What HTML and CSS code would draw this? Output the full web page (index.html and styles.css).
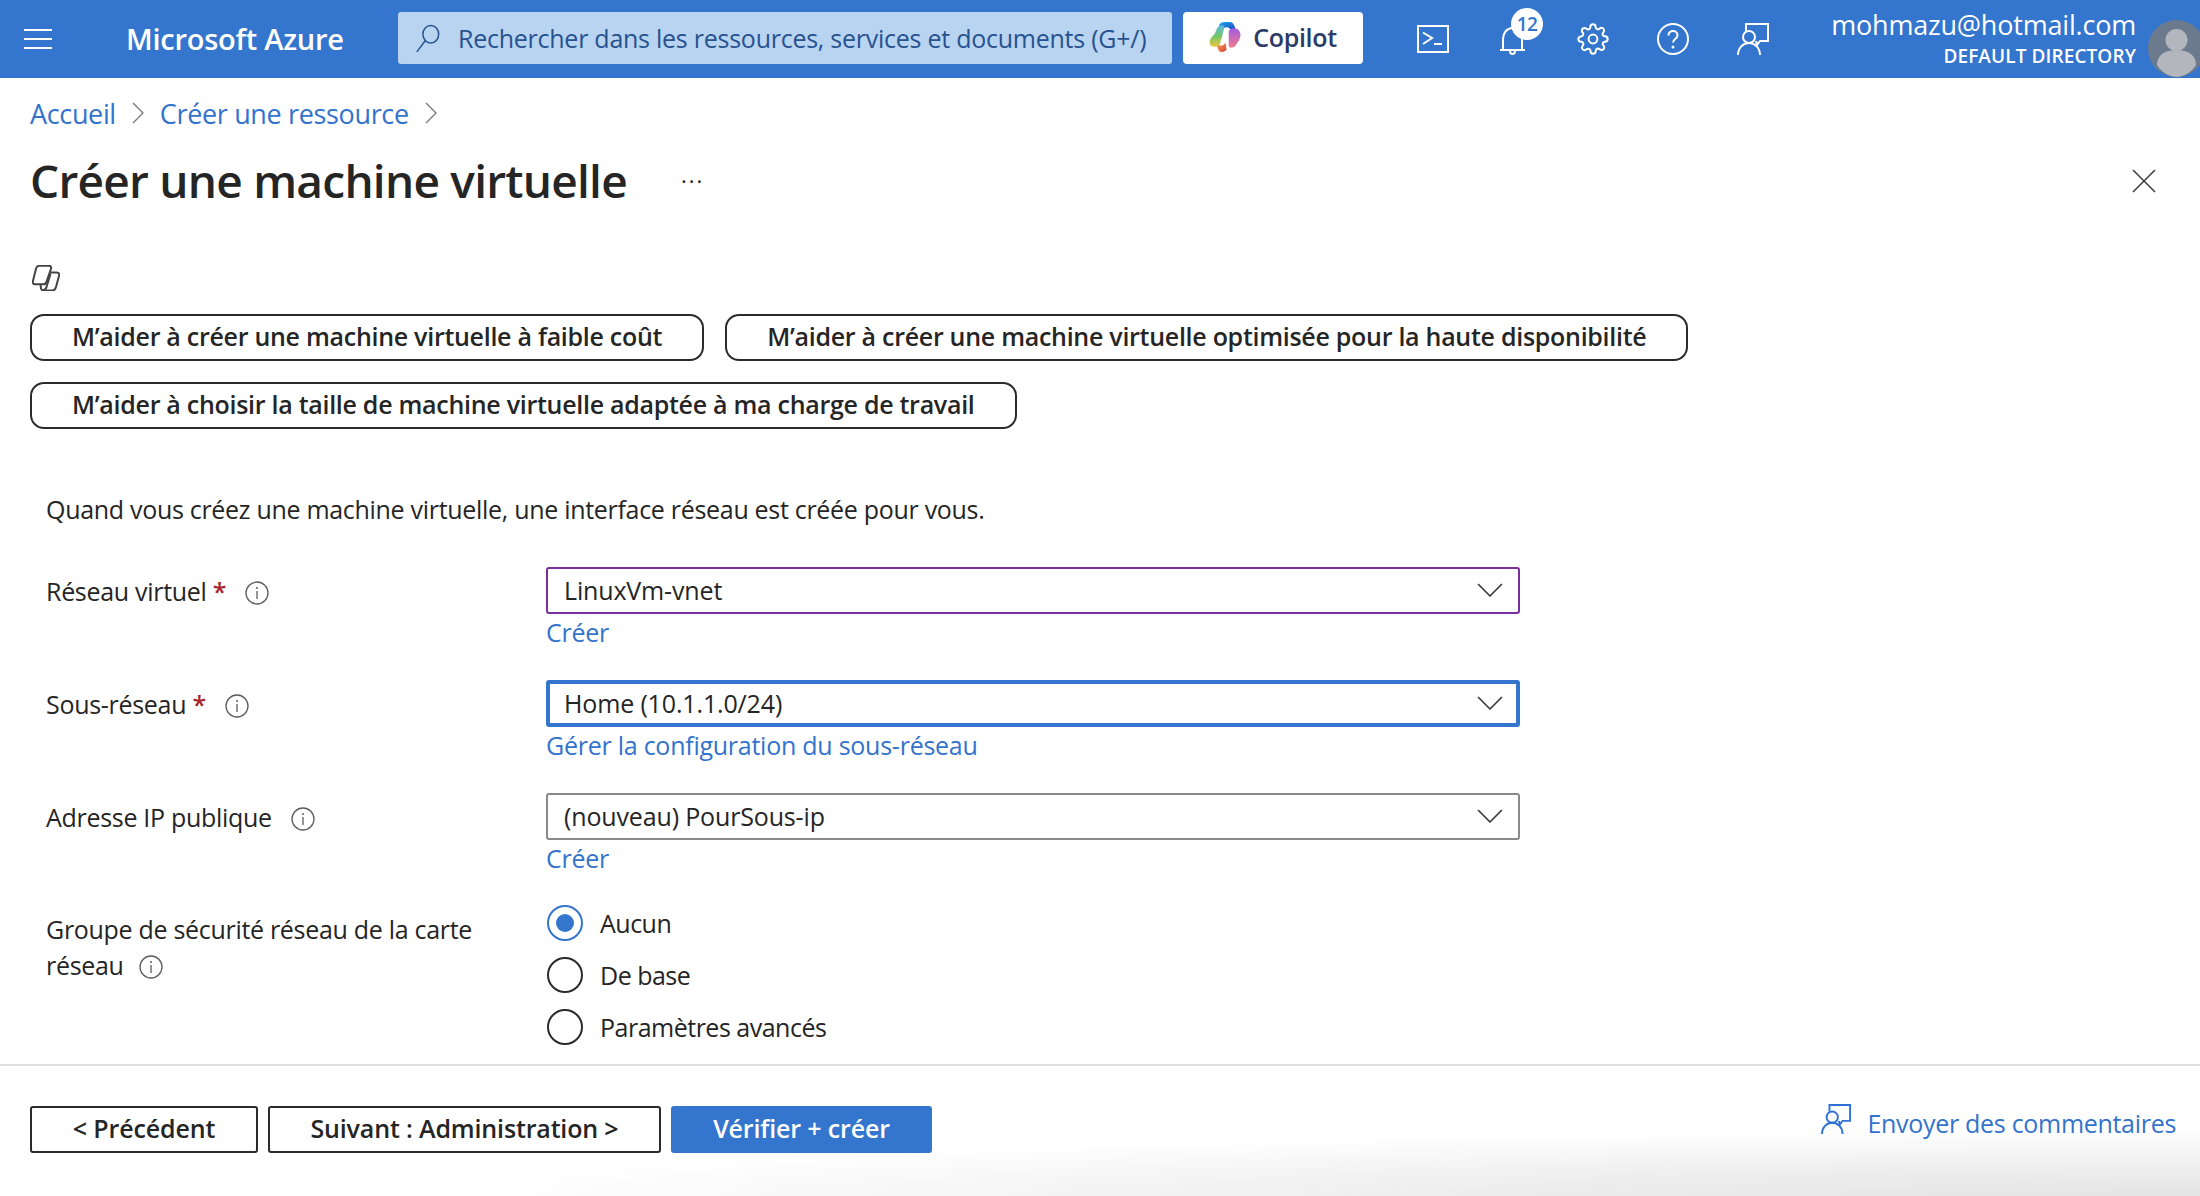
FILE: index.html
```html
<!DOCTYPE html>
<html lang="fr">
<head>
    <meta charset="UTF-8">
    <meta name="viewport" content="width=device-width, initial-scale=1.0">
    <title>Créer une machine virtuelle - Microsoft Azure</title>
    <link rel="stylesheet" href="styles.css">
</head>
<body>
<header class="topbar">
    <button class="menu-btn" aria-label="Menu"><span></span><span></span><span></span></button>
    <div class="brand">Microsoft Azure</div>
    <div class="search">
        <svg class="search-icon" viewBox="0 0 28 32" fill="none" stroke="#27528f" stroke-width="1.6"><ellipse cx="17" cy="12" rx="8.5" ry="9.5"/><path d="M11 19 2 31"/></svg>
        <span>Rechercher dans les ressources, services et documents (G+/)</span>
    </div>
    <button class="copilot">
        <svg class="copilot-logo" viewBox="0 0 30 28">
            <defs>
                <linearGradient id="cpA" x1="0" y1="0" x2="1" y2="1"><stop offset="0" stop-color="#1ea7e8"/><stop offset="1" stop-color="#1c3fc4"/></linearGradient>
                <linearGradient id="cpB" x1="0" y1="0" x2="0" y2="1"><stop offset="0" stop-color="#5fb8e8"/><stop offset=".5" stop-color="#6fc66a"/><stop offset="1" stop-color="#f2c53d"/></linearGradient>
                <linearGradient id="cpC" x1="0" y1="0" x2="0" y2="1"><stop offset="0" stop-color="#a35de0"/><stop offset="1" stop-color="#ef7a8e"/></linearGradient>
                <linearGradient id="cpD" x1="0" y1="0" x2="1" y2="1"><stop offset="0" stop-color="#f7a14b"/><stop offset="1" stop-color="#d9443f"/></linearGradient>
            </defs>
            <path fill="url(#cpA)" d="M9 3C10 1 12 0 14 0h5c2 0 3 1 4 3l2 5h-5c-1-2-2-3-4-3-2 0-3 1-4 3z"/>
            <path fill="url(#cpB)" d="M7 6c1-2 3-3 5-3 1 0 2 1 2 2l-4 15c-.5 2-2 3-4 3H4c-3 0-4.500-3-3.500-6 1-3 3-4 4.500-6z"/>
            <path fill="url(#cpC)" d="M18 9c.5-2 2-3 4-3h2c3 0 5 3 5 6 0 4-2 6-4 9-1 2-3 3-5 3-1 0-2-1-2-2z"/>
            <path fill="url(#cpD)" d="M7 22h5c1 0 2-1 3-3l1 7c-1 1-2 2-4 2H11c-2 0-3-2-4-6z"/>
        </svg>
        <span>Copilot</span>
    </button>
    <nav class="top-icons">
        <a class="top-icon" href="#"><svg viewBox="0 0 32 28" fill="none" stroke="#fff" stroke-width="2"><rect x="1" y="1" width="30" height="26"/><path d="M6 7.500 15 13l-9 6M17 19h8"/></svg></a>
        <a class="top-icon bell" href="#">
            <svg viewBox="0 0 26 30" fill="none" stroke="#fff" stroke-width="2"><path d="M3 24V13C3 7 7 2 12.500 2S22 7 22 13v11M0 24h25M10 25c0 4 5 4 5 0"/></svg>
            <span class="badge">12</span>
        </a>
        <a class="top-icon" href="#"><svg viewBox="0 0 24 24" fill="none" stroke="#fff" stroke-width="1.5"><circle cx="12" cy="12" r="3.300"/><path d="M19.400 15a1.650 1.650 0 0 0 .33 1.820l.06.06a2 2 0 0 1 0 2.830 2 2 0 0 1-2.830 0l-.06-.06a1.650 1.650 0 0 0-1.820-.33 1.650 1.650 0 0 0-1 1.510V21a2 2 0 0 1-2 2 2 2 0 0 1-2-2v-.09A1.650 1.650 0 0 0 9 19.400a1.650 1.650 0 0 0-1.820.33l-.06.06a2 2 0 0 1-2.830 0 2 2 0 0 1 0-2.830l.06-.06a1.650 1.650 0 0 0 .33-1.820 1.650 1.650 0 0 0-1.510-1H3a2 2 0 0 1-2-2 2 2 0 0 1 2-2h.09A1.650 1.650 0 0 0 4.600 9a1.650 1.650 0 0 0-.33-1.820l-.06-.06a2 2 0 0 1 0-2.830 2 2 0 0 1 2.830 0l.06.06a1.650 1.650 0 0 0 1.820.33H9a1.650 1.650 0 0 0 1-1.510V3a2 2 0 0 1 2-2 2 2 0 0 1 2 2v.09a1.650 1.650 0 0 0 1 1.510 1.650 1.650 0 0 0 1.820-.33l.06-.06a2 2 0 0 1 2.830 0 2 2 0 0 1 0 2.830l-.06.06a1.650 1.650 0 0 0-.33 1.820V9a1.650 1.650 0 0 0 1.510 1H21a2 2 0 0 1 2 2 2 2 0 0 1-2 2h-.09a1.650 1.650 0 0 0-1.510 1z"/></svg></a>
        <a class="top-icon" href="#"><svg viewBox="0 0 32 32" fill="none" stroke="#fff" stroke-width="2"><circle cx="16" cy="16" r="15"/><path d="M11.500 12.500C11.500 9.500 14 8 16 8s4.500 1.500 4.500 4.300c0 3.700-4.500 3.700-4.500 7.200"/><circle cx="16" cy="24" r="1.500" fill="#fff" stroke="none"/></svg></a>
        <a class="top-icon" href="#"><svg viewBox="0 0 32 32" fill="none" stroke="#fff" stroke-width="2"><use href="#fb"/></svg></a>
    </nav>
    <div class="account">
        <div class="account-mail">mohmazu@hotmail.com</div>
        <div class="account-dir">DEFAULT DIRECTORY</div>
    </div>
    <div class="avatar">
        <svg viewBox="0 0 57 57"><circle cx="28.500" cy="20" r="11" fill="#b3b7bd"/><path fill="#b3b7bd" d="M9 45c0-10 8-15 19.500-15S48 35 48 45c-5 8-13 12-19.500 12S14 53 9 45z"/></svg>
    </div>
</header>

<svg width="0" height="0" class="defs">
    <symbol id="fb" viewBox="0 0 32 32">
        <path d="M9 8V1h22v17h-8l-3 4-1-4"/>
        <circle cx="12" cy="14" r="6"/>
        <path d="M1 32c0-7 5-12 11-12s11 5 11 12"/>
    </symbol>
    <symbol id="info" viewBox="0 0 24 24">
        <circle cx="12" cy="12" r="11" fill="none" stroke="#5c5c5c" stroke-width="1.300"/>
        <path d="M12 10v8" stroke="#5c5c5c" stroke-width="1.300"/>
        <circle cx="12" cy="7" r="1" fill="#5c5c5c"/>
    </symbol>
    <symbol id="chev" viewBox="0 0 24 14" preserveAspectRatio="none">
        <path d="M1 1 12 13 23 1" fill="none" stroke="#3a3a3a" stroke-width="1.500"/>
    </symbol>
</svg>

<main class="page">
    <div class="breadcrumb">
        <a href="#">Accueil</a>
        <svg class="crumb-sep" viewBox="0 0 12 22"><path d="M1 1 11 11 1 21" fill="none" stroke="#777" stroke-width="1.300"/></svg>
        <a href="#">Créer une ressource</a>
        <svg class="crumb-sep" viewBox="0 0 12 22"><path d="M1 1 11 11 1 21" fill="none" stroke="#777" stroke-width="1.300"/></svg>
    </div>

    <div class="title-row">
        <h1>Créer une machine virtuelle</h1>
        <span class="more">···</span>
        <svg class="close" viewBox="0 0 24 24"><path d="M1 1 23 23M23 1 1 23" stroke="#3a3a3a" stroke-width="1.500"/></svg>
    </div>

    <svg class="copilot-mono" viewBox="0 0 28 26" fill="none" stroke="#444" stroke-width="2">
        <path d="M7 .8h10c2 0 2.500 1.500 2 3l-4.500 13c-.5 1.500-1.500 2.500-3 2.500H3c-2 0-2.500-1.500-2-3.500l3-12c.5-2 1.500-3 3-3z"/>
        <path d="M18 7.500h7c2 0 2.500 1.500 2 3.500l-3 11c-.5 2-2 3.500-4 3.500H11c-1 0-1.500-.5-2-2l-.5-4"/>
        <path d="M11 25c2 0 3-1 3.500-3l4-13"/>
    </svg>

    <div class="prompts">
        <button class="pill">M’aider à créer une machine virtuelle à faible coût</button>
        <button class="pill">M’aider à créer une machine virtuelle optimisée pour la haute disponibilité</button>
        <button class="pill">M’aider à choisir la taille de machine virtuelle adaptée à ma charge de travail</button>
    </div>

    <form class="form">
        <p class="intro">Quand vous créez une machine virtuelle, une interface réseau est créée pour vous.</p>

        <div class="field">
            <label class="field-label">Réseau virtuel <span class="req">*</span><svg class="info"><use href="#info"/></svg></label>
            <div class="control">
                <div class="dropdown hover"><span>LinuxVm-vnet</span><svg class="chev"><use href="#chev"/></svg></div>
                <a class="sub-link" href="#">Créer</a>
            </div>
        </div>

        <div class="field">
            <label class="field-label">Sous-réseau <span class="req">*</span><svg class="info"><use href="#info"/></svg></label>
            <div class="control">
                <div class="dropdown focus"><span>Home (10.1.1.0/24)</span><svg class="chev"><use href="#chev"/></svg></div>
                <a class="sub-link" href="#">Gérer la configuration du sous-réseau</a>
            </div>
        </div>

        <div class="field">
            <label class="field-label">Adresse IP publique<svg class="info"><use href="#info"/></svg></label>
            <div class="control">
                <div class="dropdown"><span>(nouveau) PourSous-ip</span><svg class="chev"><use href="#chev"/></svg></div>
                <a class="sub-link" href="#">Créer</a>
            </div>
        </div>

        <div class="field radio-field">
            <label class="field-label">Groupe de sécurité réseau de la carte réseau<svg class="info"><use href="#info"/></svg></label>
            <div class="radios">
                <div class="radio checked"><span class="dot"></span>Aucun</div>
                <div class="radio"><span class="dot"></span>De base</div>
                <div class="radio"><span class="dot"></span>Paramètres avancés</div>
            </div>
        </div>
    </form>
</main>

<footer class="footer">
    <button class="btn btn-prev">&lt; Précédent</button>
    <button class="btn btn-next">Suivant : Administration &gt;</button>
    <button class="btn btn-primary">Vérifier + créer</button>
    <a class="feedback" href="#"><svg viewBox="0 0 32 32" fill="none" stroke="#2f6fd6" stroke-width="2"><use href="#fb"/></svg>Envoyer des commentaires</a>
</footer>
</body>
</html>
```

FILE: styles.css
```css
* {
    box-sizing: border-box;
}
html, body {
    margin: 0;
    padding: 0;
}
body {
    width: 2200px;
    height: 1196px;
    overflow: hidden;
    display: flex;
    flex-direction: column;
    font-family: "Open Sans", "Noto Sans", sans-serif;
    font-size: 25px;
    color: #252525;
    background: #fff;
}
a {
    color: #3373cc;
    text-decoration: none;
}
button {
    font-family: inherit;
    cursor: pointer;
}
.defs {
    position: absolute;
}

/* top bar */
.topbar {
    height: 78px;
    flex: none;
    display: flex;
    align-items: center;
    background: #3475cd;
    color: #fff;
    overflow: hidden;
}
.menu-btn {
    width: 28px;
    height: 20px;
    margin-left: 24px;
    padding: 0;
    border: 0;
    background: none;
    display: flex;
    flex-direction: column;
    justify-content: space-between;
}
.menu-btn span {
    display: block;
    height: 2px;
    background: #fff;
}
.brand {
    margin-left: 74px;
    margin-bottom: 2px;
    width: 272px;
    font-size: 29px;
    font-weight: 600;
    letter-spacing: -0.25px;
}
.search {
    width: 774px;
    height: 52px;
    margin-bottom: 2px;
    display: flex;
    align-items: center;
    padding-left: 17px;
    border-radius: 3px;
    background: #b9d4f0;
    color: #27528f;
    font-size: 25px;
    letter-spacing: -0.25px;
    white-space: nowrap;
}
.search-icon {
    width: 26px;
    height: 30px;
    margin-right: 17px;
}
.copilot {
    width: 180px;
    height: 52px;
    margin-left: 11px;
    margin-bottom: 2px;
    padding: 0 0 2px;
    display: flex;
    align-items: center;
    justify-content: center;
    gap: 11px;
    border: 0;
    border-radius: 4px;
    background: #fff;
    color: #2b3a67;
    font-size: 25px;
    font-weight: 600;
    letter-spacing: -0.3px;
}
.copilot-logo {
    width: 33px;
    height: 30px;
}
.top-icons {
    margin-left: 30px;
    display: flex;
}
.top-icon {
    position: relative;
    width: 80px;
    height: 78px;
    display: flex;
    align-items: center;
    justify-content: center;
}
.top-icon svg {
    width: 32px;
    height: 32px;
}
.bell svg {
    width: 26px;
    height: 30px;
    margin-top: 3px;
}
.badge {
    position: absolute;
    left: 38px;
    top: 8px;
    width: 32px;
    height: 32px;
    border-radius: 50%;
    background: #fff;
    color: #3475cd;
    font-size: 19px;
    font-weight: 600;
    text-align: center;
    line-height: 32px;
    letter-spacing: -0.5px;
}
.account {
    margin-left: auto;
    text-align: right;
    white-space: nowrap;
}
.account-mail {
    font-size: 27px;
    line-height: 33px;
    letter-spacing: -0.2px;
}
.account-dir {
    margin-top: 2px;
    font-size: 19px;
    font-weight: 600;
    line-height: 27px;
    letter-spacing: 0.1px;
}
.avatar {
    width: 57px;
    height: 57px;
    flex: none;
    margin: 18px -5px 0 12px;
    border-radius: 50%;
    background: #6c7a8d;
    overflow: hidden;
}
.avatar svg {
    display: block;
}

/* page head */
.page {
    flex: 1;
    padding: 0 30px;
    min-height: 0;
}
.breadcrumb {
    height: 36px;
    margin-top: 17px;
    display: flex;
    align-items: center;
    font-size: 27px;
    letter-spacing: -0.35px;
}
.crumb-sep {
    width: 12px;
    height: 22px;
    margin: 0 16px 0 16px;
}
.title-row {
    position: relative;
    height: 64px;
    margin-top: 17px;
    display: flex;
    align-items: center;
}
h1 {
    margin: 0;
    font-size: 46px;
    font-weight: 600;
    letter-spacing: -0.75px;
    white-space: nowrap;
}
.more {
    margin-left: 54px;
    font-size: 22px;
    letter-spacing: 2px;
}
.close {
    position: absolute;
    right: 14px;
    top: 21px;
    width: 24px;
    height: 24px;
}
.copilot-mono {
    display: block;
    width: 28px;
    height: 26px;
    margin: 53px 0 0 2px;
}
.prompts {
    width: 1680px;
    margin-top: 23px;
    display: flex;
    flex-wrap: wrap;
    gap: 21px;
}
.pill {
    height: 47px;
    padding: 0 40px 3px;
    border: 2px solid #2b2b2b;
    border-radius: 14px;
    background: #fff;
    color: #252525;
    font-size: 25px;
    font-weight: 600;
    letter-spacing: -0.28px;
    white-space: nowrap;
}

/* form */
.form {
    padding-left: 16px;
}
.intro {
    margin: 64px 0 0;
    height: 34px;
    line-height: 33px;
    letter-spacing: -0.3px;
}
.field {
    display: flex;
    align-items: flex-start;
    height: 113px;
}
.intro + .field {
    margin-top: 40px;
}
.field-label {
    width: 500px;
    padding-right: 46px;
    flex: none;
    padding-top: 6px;
    line-height: 36px;
    letter-spacing: -0.3px;
}
.req {
    color: #a4262c;
    font-weight: 600;
}
.info {
    width: 24px;
    height: 24px;
    margin-left: 19px;
    vertical-align: -4px;
}
.radio-field .info {
    margin-left: 15px;
}
.control {
    width: 974px;
}
.dropdown {
    height: 47px;
    display: flex;
    align-items: center;
    justify-content: space-between;
    padding: 0 15px 2px 16px;
    border: 2px solid #8a8a8a;
    border-radius: 3px;
    letter-spacing: -0.15px;
}
.dropdown.hover {
    border-color: #7a2f9e;
}
.dropdown.focus {
    border: 4px solid #3475cd;
    padding: 0 13px 2px 14px;
}
.chev {
    width: 26px;
    height: 14px;
}
.sub-link {
    display: block;
    height: 40px;
    line-height: 37px;
    letter-spacing: -0.25px;
}
.radio-field {
    height: 158px;
}
.radio-field .field-label {
    padding-top: 5px;
}
.radios {
    margin-top: -1px;
    margin-left: 1px;
    display: flex;
    flex-direction: column;
    gap: 16px;
}
.radio {
    height: 36px;
    display: flex;
    align-items: center;
    gap: 17px;
    letter-spacing: -0.5px;
}
.dot {
    width: 36px;
    height: 36px;
    border: 2px solid #2b2b2b;
    border-radius: 50%;
    display: flex;
    align-items: center;
    justify-content: center;
    background: #fff;
}
.radio.checked .dot {
    border-color: #3475cd;
}
.radio.checked .dot::after {
    content: "";
    width: 18px;
    height: 18px;
    border-radius: 50%;
    background: #3475cd;
}

/* footer */
.footer {
    height: 132px;
    flex: none;
    display: flex;
    align-items: flex-start;
    gap: 10px;
    padding: 40px 24px 0 30px;
    border-top: 2px solid #dedede;
    background:
        radial-gradient(ellipse 1760px 66px at 100% 100%, #e4e4e4, #ededed 40%, rgba(240, 240, 240, 0) 100%),
        #fff;
}
.btn {
    height: 47px;
    padding-bottom: 4px;
    border: 2px solid #2b2b2b;
    border-radius: 3px;
    background: #fff;
    color: #252525;
    font-size: 25px;
    font-weight: 600;
    letter-spacing: -0.15px;
    white-space: nowrap;
}
.btn-prev {
    width: 228px;
}
.btn-next {
    width: 393px;
}
.btn-primary {
    width: 261px;
    border: 0;
    background: #3475cd;
    color: #fff;
}
.feedback {
    margin-left: auto;
    display: flex;
    align-items: center;
    gap: 16px;
    height: 34px;
    font-size: 25px;
    letter-spacing: -0.3px;
    white-space: nowrap;
}
.feedback svg {
    width: 30px;
    height: 30px;
    margin-top: -8px;
}
```
